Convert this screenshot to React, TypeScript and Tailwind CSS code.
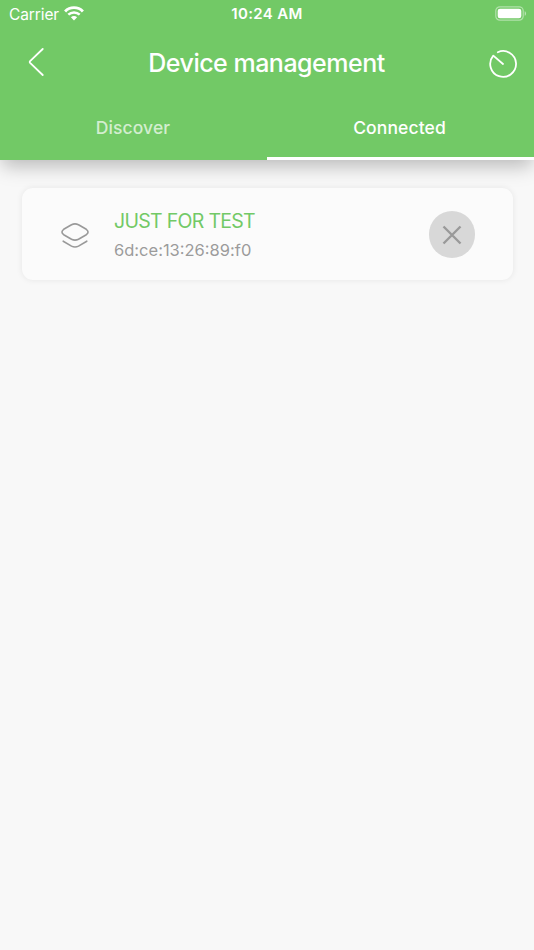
import type { ReactNode } from 'react'

function WifiIcon() {
  return (
    <svg width="20" height="15" viewBox="0 0 20 15" fill="none" stroke="white">
      <path d="M1.1 5.4C6 .4 14 .4 18.900 5.400" strokeWidth="2.900" />
      <path d="M4.300 8.700C7.500 5.600 12.500 5.600 15.700 8.700" strokeWidth="2.500" />
      <path d="M10 14.500L6.900 11.300C8.700 9.700 11.300 9.700 13.100 11.300Z" fill="white" stroke="none" />
    </svg>
  )
}

function BatteryIcon() {
  return (
    <svg width="32" height="15" viewBox="0 0 32 15" fill="none">
      <rect x="0.800" y="0.800" width="27.400" height="13.400" rx="4" stroke="white" strokeOpacity="0.450" strokeWidth="1.200" />
      <rect x="2.700" y="2.700" width="23.600" height="9.600" rx="2.300" fill="white" />
      <path d="M29.700 5.200C31.500 5.900 31.500 9.100 29.700 9.800Z" fill="white" fillOpacity="0.500" />
    </svg>
  )
}

function BackIcon() {
  return (
    <svg width="16" height="28" viewBox="0 0 16 28" fill="none" stroke="white" strokeWidth="1.800" strokeLinecap="round" strokeLinejoin="round">
      <path d="M14.700 1L2.100 13.200Q1.400 14 2.100 14.800L14.700 27" />
    </svg>
  )
}

function TimerIcon() {
  return (
    <svg width="28" height="28" viewBox="0 0 28 28" fill="none" stroke="white" strokeWidth="1.800" strokeLinecap="round" strokeLinejoin="round">
      <path d="M8.800 2.200A12.900 12.900 0 1 1 4.300 5.600L14 14" />
    </svg>
  )
}

function LayersIcon() {
  return (
    <svg width="28" height="26" viewBox="0 0 28 26" fill="none" stroke="#999999" strokeWidth="1.600" strokeLinecap="round" strokeLinejoin="round">
      <path d="M10.500 1.700Q14 0 17.500 1.700L25.300 6.300Q28.800 9 25.300 11.700L17.500 16.300Q14 18 10.500 16.300L2.700 11.700Q-.8 9 2.700 6.300Z" />
      <path d="M2.200 18.200L10.500 23.100Q14 24.900 17.500 23.100L25.800 18.200" />
    </svg>
  )
}

type TabProps = {
  active?: boolean
  children: ReactNode
}

function Tab({ active, children }: TabProps) {
  return (
    <button
      className={`flex h-16 w-1/2 items-center justify-center border-b-[3px] pt-[3px] text-[17.5px] font-medium tracking-[0.1px] ${
        active ? 'border-white pr-0.5 text-white' : 'border-transparent pr-px text-white/70'
      }`}
    >
      {children}
    </button>
  )
}

export default function App() {
  return (
    <div className="h-[950px] w-[534px] overflow-hidden bg-[#f8f8f8] font-['Inter',sans-serif]">
      <header className="h-40 bg-[#72c966] text-white shadow-[0_8px_18px_-2px_rgba(0,0,0,0.26)]">
        <div className="grid h-7 grid-cols-3 items-center pl-[9px] pr-[7px]">
          <div className="flex items-center gap-[5px] text-[15.5px]">
            <span className="pt-px tracking-[-0.1px]">Carrier</span>
            <div className="pb-0.5">
              <WifiIcon />
            </div>
          </div>
          <span className="pr-0.5 text-center text-[15px] font-semibold tracking-[0.35px]">10:24 AM</span>
          <div className="flex justify-end pb-px">
            <BatteryIcon />
          </div>
        </div>
        <div className="grid h-[68px] grid-cols-[1fr_auto_1fr] items-center pl-7 pr-[17px] pt-[3px]">
          <button className="w-7 pb-1">
            <BackIcon />
          </button>
          <h1 className="pr-3 text-[25px] font-medium tracking-[-0.5px]">Device management</h1>
          <button className="w-7 justify-self-end">
            <TimerIcon />
          </button>
        </div>
        <nav className="flex">
          <Tab>Discover</Tab>
          <Tab active>Connected</Tab>
        </nav>
      </header>

      <main className="px-[21.5px] pt-[28.4px]">
        <div className="flex h-[92px] items-center rounded-[11px] bg-[#fbfbfb] pl-[39.5px] pr-[37.5px] shadow-[0_0_6px_rgba(0,0,0,0.08)]">
          <div className="pt-1">
            <LayersIcon />
          </div>
          <div className="ml-[25px] flex-1 pt-[3px]">
            <p className="text-[19.5px] leading-[29px] tracking-[-0.7px] text-[#72c966]">JUST FOR TEST</p>
            <p className="text-[16.5px] leading-[29px] text-[#9b9b9b]">6d:ce:13:26:89:f0</p>
          </div>
          <button className="flex size-[46.5px] items-center justify-center rounded-full bg-[#d8d8d8] pt-px">
            <svg width="20" height="20" viewBox="0 0 20 20" stroke="#999999" strokeWidth="2.400">
              <path d="M1.500 1.500L18.500 18.500M18.500 1.500L1.500 18.500" />
            </svg>
          </button>
        </div>
      </main>
    </div>
  )
}
